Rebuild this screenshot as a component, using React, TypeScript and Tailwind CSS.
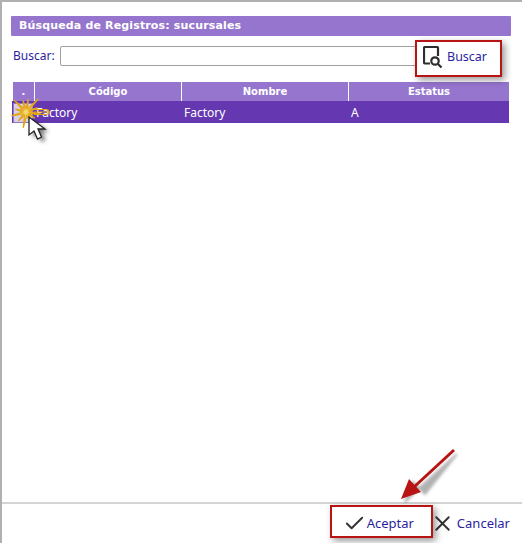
import { Check, X } from 'lucide-react';

const columns = [
  { label: '.', width: 'w-[21px]' },
  { label: 'Código', width: 'w-[146px]' },
  { label: 'Nombre', width: 'w-[166px]' },
  { label: 'Estatus', width: 'flex-1' },
];

const SearchIcon = () => (
  <svg width="20" height="23" viewBox="0 0 20 23" fill="none" className="shrink-0">
    <path d="M7 17.500H2a1 1 0 0 1-1-1V2a1 1 0 0 1 1-1h12a1 1 0 0 1 1 1v8" stroke="#2e2e2e" strokeWidth="2.200" />
    <circle cx="12" cy="15" r="3.700" stroke="#2e2e2e" strokeWidth="2.200" />
    <path d="M15 18l3.500 3.500" stroke="#2e2e2e" strokeWidth="2.200" />
  </svg>
);

// spikes of the click flash, [angle in degrees, length in px]
const spikes: [number, number][] = [
  [-80, 13], [-47, 18], [-20, 12], [8, 15], [35, 11], [65, 15],
  [100, 16], [130, 12], [165, 15], [195, 11], [225, 17], [255, 12],
];

const starPoints = spikes
  .flatMap(([deg, len]) => {
    const a = (deg * Math.PI) / 180;
    const b = ((deg + 15) * Math.PI) / 180;
    return [
      `${16 + Math.cos(a) * len},${16 + Math.sin(a) * len}`,
      `${16 + Math.cos(b) * 3.500},${16 + Math.sin(b) * 3.500}`,
    ];
  })
  .join(' ');

// click marker drawn over the first row
const ClickMarker = () => (
  <svg width="56" height="52" viewBox="0 0 56 52" className="absolute left-[8px] top-[94px]">
    <defs>
      <filter id="cursorShadow" x="-50%" y="-50%" width="220%" height="220%">
        <feGaussianBlur stdDeviation="2.200" />
      </filter>
    </defs>
    <polygon points={starPoints} fill="#f6d878" stroke="#e3a514" strokeWidth="1.200" />
    <path d="M24 13.500h12q3 0 3 2.500t-3 2.500H24M24 16h15" stroke="#e3a514" strokeWidth="1.100" fill="none" />
    <path
      d="M19 21v18l5-4 3.500 8 4-2-3.500-8h7z"
      fill="#000"
      opacity="0.55"
      filter="url(#cursorShadow)"
      transform="translate(4 3)"
    />
    <path d="M19 21v18l5-4 3.500 8 4-2-3.500-8h7z" fill="#fff" stroke="#222" strokeWidth="1.300" />
  </svg>
);

const RedArrow = () => (
  <svg width="64" height="60" viewBox="0 0 64 60" className="absolute left-[396px] top-[444px]">
    <defs>
      <filter id="arrowShadow" x="-30%" y="-30%" width="160%" height="160%">
        <feGaussianBlur stdDeviation="1.500" />
      </filter>
    </defs>
    <path d="M56 5L15 42l-11 11 8-20 12 12z" fill="#000" stroke="#000" strokeWidth="2" opacity="0.3" filter="url(#arrowShadow)" transform="translate(3 3)" />
    <path d="M56 4L16 41" stroke="#b81414" strokeWidth="3" />
    <path d="M3 53l8-20 12 13z" fill="#b81414" />
  </svg>
);

export default function App() {
  return (
    <div className="relative flex h-[543px] w-[522px] flex-col border-l-2 border-t-2 border-[#b0b0b0] bg-white font-['Noto_Sans',sans-serif] text-[12px]">
      <div className="flex-1 pl-[9px] pr-[11px] pt-[14px]">
        <div className="flex h-[20px] items-center rounded-[1px] bg-[#9675ce] pl-[8px] pt-[1px] font-['DejaVu_Sans',sans-serif] text-[11px] font-bold tracking-[0.15px] text-white">
          Búsqueda de Registros: sucursales
        </div>

        <div className="mt-[10px] flex items-center pl-[2px]">
          <span className="w-[47px] text-[#2b1f9e]">Buscar:</span>
          <input className="h-[20px] w-[357px] rounded-[2px] border border-[#a0a0a0] bg-white" />
        </div>

        <div className="ml-[2px] mt-[16px] w-[496px]">
          <div className="flex h-[19px] gap-px bg-white">
            {columns.map((col) => (
              <div
                key={col.label}
                className={`${col.width} flex items-center justify-center bg-[#9675ce] font-['DejaVu_Sans',sans-serif] text-[10px] font-bold text-white`}
              >
                {col.label}
              </div>
            ))}
          </div>
          <div className="-ml-px flex h-[22px] items-center bg-[#6538b2] pt-[1px] text-white">
            <span className="ml-px mr-[2px] h-[20px] w-[20px] self-center border border-[#8f78c4] bg-[#d8cfe8]" />
            <span className="w-[147px] pl-px">Factory</span>
            <span className="w-[167px] pl-[2px]">Factory</span>
            <span className="pl-[2px]">A</span>
          </div>
        </div>
      </div>

      <div className="flex h-[41px] items-center justify-end border-t-2 border-[#d4d4d4] pr-[12px] text-[13px] text-[#2b1f9e]">
        <div className="flex items-center gap-px">
          <Check size={23} strokeWidth={2} className="text-[#333]" />
          <span>Aceptar</span>
        </div>
        <div className="ml-[16px] flex items-center gap-[2px]">
          <X size={25} strokeWidth={1.8} className="text-[#333]" />
          <span>Cancelar</span>
        </div>
      </div>

      {/* annotation boxes sit over the form */}
      <div className="absolute left-[413px] top-[38px] flex h-[37px] w-[87px] items-center gap-[4px] border-[2px] border-[#b81414] pb-[3px] pl-[6px] text-[12.5px] text-[#2b1f9e] shadow-[3px_3px_7px_rgba(0,0,0,0.4)]">
        <SearchIcon />
        <span>Buscar</span>
      </div>
      <div className="absolute left-[328px] top-[503px] h-[33px] w-[103px] border-[2px] border-[#b81414] shadow-[3px_3px_7px_rgba(0,0,0,0.4)]" />
      <ClickMarker />
      <RedArrow />
    </div>
  );
}
